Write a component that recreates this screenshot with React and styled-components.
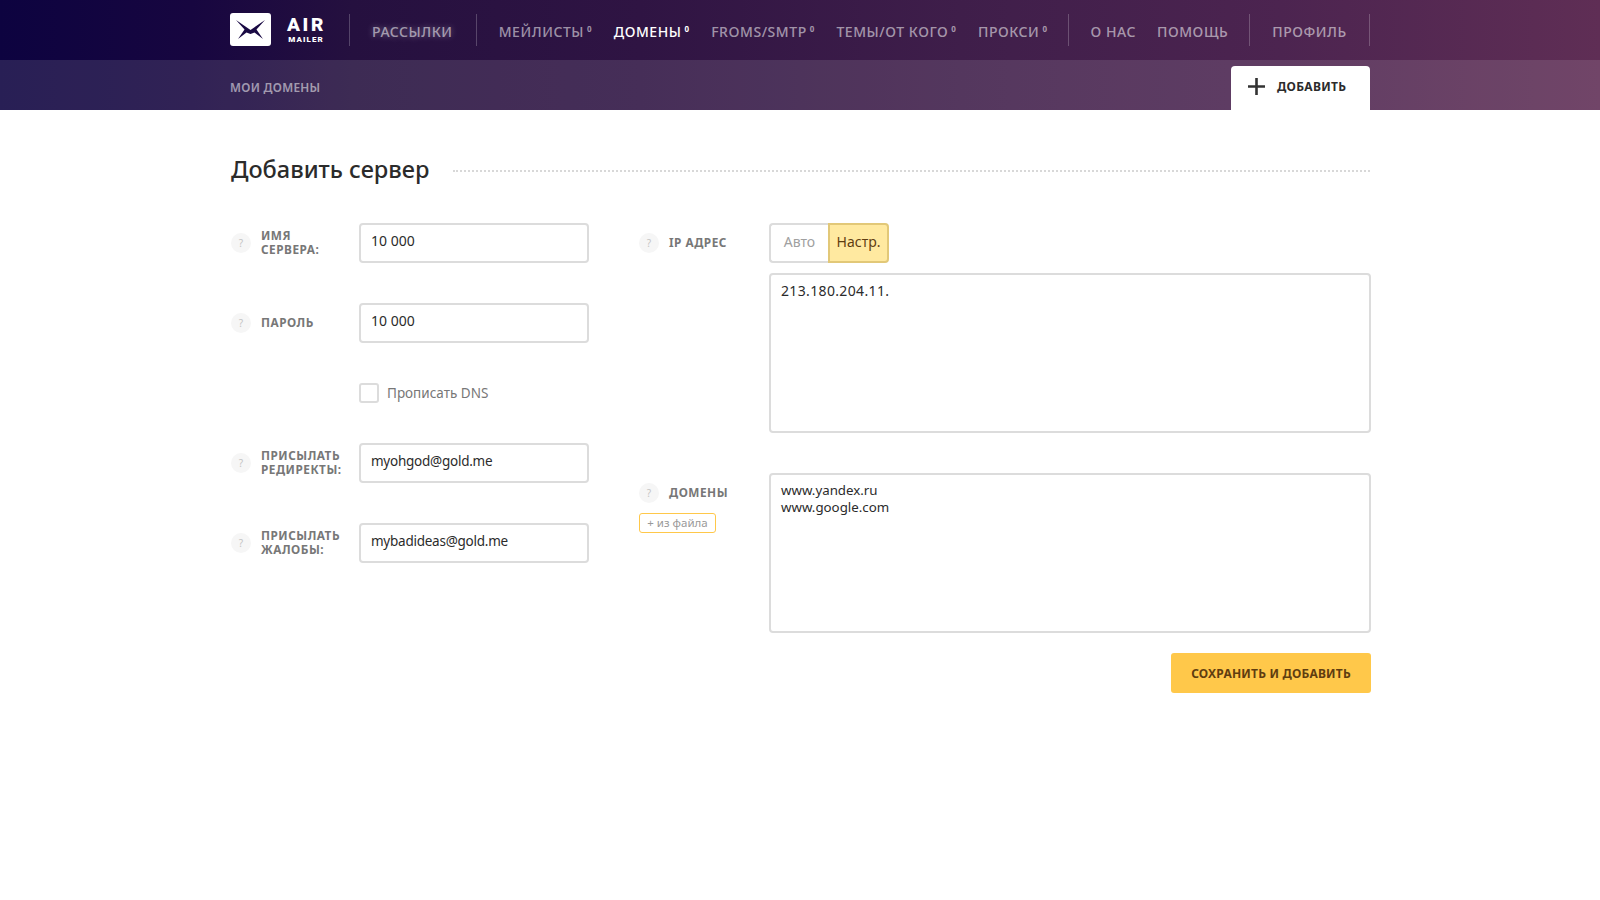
import React from "react";
import styled, { createGlobalStyle } from "styled-components";

const Global = createGlobalStyle`
  html, body { margin: 0; padding: 0; background: #fff; }
  body { font-family: "Noto Sans", "Open Sans", sans-serif; color: #2b2b2b; }
  * { box-sizing: border-box; }
`;
const Head = styled.header`
  height: 110px;
  background: linear-gradient(90deg, #0d0340 0%, #170640 12%, #25103f 22%, #2f1443 40%, #3f1e4a 60%, #4c2450 80%, #5f2e55 100%);
`;
const Top = styled.div`
  height: 60px;
  padding-left: 230px;
  display: flex;
  align-items: center;
`;
const Logo = styled.div`
  width: 119px;
  display: flex;
  align-items: center;
  gap: 16px;
`;
const LogoIcon = styled.svg`
  width: 41px;
  height: 33px;
  display: block;
  margin-top: -1px;
`;
const LogoText = styled.div`
  display: flex;
  flex-direction: column;
  align-items: flex-end;
  color: #fff;
  font-family: "Roboto", "Liberation Sans", sans-serif;
  font-weight: 900;
  line-height: 1;
  margin-top: -1px;
`;
const Air = styled.span`
  font-size: 19px;
  letter-spacing: 2.6px;
  margin-right: -2px;
`;
const Mailer = styled.span`
  font-size: 8px;
  letter-spacing: 1.1px;
  margin-top: 2px;
`;
const Sep = styled.div`
  width: 1px;
  height: 32px;
  flex: none;
  background: rgba(255, 255, 255, 0.22);
`;
const Group = styled.nav`
  display: flex;
  align-items: center;
  gap: ${p => p.$gap}px;
  padding: 2px ${p => p.$right}px 0 ${p => p.$left}px;
`;
const Item = styled.a`
  font-family: "Noto Sans", sans-serif;
  font-size: 14px;
  font-weight: 500;
  letter-spacing: 0.55px;
  white-space: nowrap;
  color: ${p => (p.$active ? "#fff" : "rgba(255,255,255,.55)")};
  text-shadow: ${p => (p.$glow ? "0 0 6px rgba(255,255,255,.35)" : "none")};
  sup {
    font-size: 8px;
    font-weight: 700;
    margin-left: 3px;
    vertical-align: 5px;
    line-height: 0;
  }
`;
const Sub = styled.div`
  height: 50px;
  padding: 0 230px;
  display: flex;
  align-items: center;
  justify-content: space-between;
  background: rgba(255, 255, 255, 0.115);
`;
const SubTitle = styled.span`
  font-size: 11.8px;
  font-weight: 600;
  letter-spacing: 0.3px;
  padding-top: 3px;
  color: rgba(255, 255, 255, 0.55);
`;
const AddTab = styled.a`
  align-self: flex-end;
  width: 139px;
  height: 44px;
  background: #fff;
  border-radius: 4px 4px 0 0;
  display: flex;
  align-items: center;
  padding: 0 0 4px 17px;
  gap: 12px;
  font-size: 12px;
  font-weight: 700;
  letter-spacing: 0.3px;
  color: #2b2b2b;
`;
const PlusIcon = styled.svg`
  width: 17px;
  height: 17px;
  flex: none;
`;
const Main = styled.main`
  width: 1141px;
  margin-left: 230px;
  padding-top: 44px;
`;
const TitleRow = styled.div`
  display: flex;
  align-items: center;
  gap: 24px;
  height: 30px;
  margin-bottom: 39px;
`;
const Title = styled.h1`
  margin: 0;
  font-size: 23.5px;
  font-weight: 500;
  color: #2b2b2b;
  padding-left: 1px;
  white-space: nowrap;
`;
const Dots = styled.div`
  flex: 1;
  margin: 4px 1px 0 0;
  border-top: 2px dotted #d8d8d8;
`;
const Columns = styled.div`
  display: grid;
  grid-template-columns: 360px 1fr;
  gap: 49px;
`;
const Col = styled.div`
  display: flex;
  flex-direction: column;
`;
const Row = styled.div`
  display: flex;
  align-items: center;
  padding-left: 1px;
  margin-bottom: ${p => p.$mb ?? 40}px;
`;
const Hint = styled.span`
  width: 20px;
  height: 20px;
  flex: none;
  border-radius: 50%;
  background: #f6f6f6;
  color: #c4c4c4;
  font-size: 10px;
  display: flex;
  align-items: center;
  justify-content: center;
`;
const Label = styled.label`
  width: 108px;
  padding: 0 10px;
  margin-top: -3px;
  flex: none;
  font-size: 11.8px;
  font-weight: 700;
  line-height: 14px;
  letter-spacing: 0.5px;
  color: #777;
`;
const Input = styled.div`
  width: 230px;
  height: 40px;
  border: 2px solid #dcdcdc;
  border-radius: 4px;
  font-size: ${p => (p.$mail ? 13.5 : 14)}px;
  letter-spacing: ${p => (p.$mail ? -0.25 : 0)}px;
  line-height: ${p => (p.$mail ? 33 : 32)}px;
  padding-left: 10px;
  color: #2b2b2b;
`;
const CheckRow = styled.div`
  display: flex;
  align-items: center;
  gap: 8px;
  margin: 0 0 40px 129px;
  font-size: 13.5px;
  line-height: 20px;
  color: #777;
`;
const Check = styled.span`
  width: 20px;
  height: 20px;
  border: 2px solid #dcdcdc;
  border-radius: 3px;
`;
const Toggle = styled.div`
  display: flex;
  height: 40px;
  width: 120px;
  margin-bottom: 10px;
`;
const Opt = styled.span`
  flex: 1;
  display: flex;
  align-items: center;
  justify-content: center;
  font-size: 14px;
  padding-bottom: 4px;
  border: 2px solid ${p => (p.$on ? "#e2c878" : "#dcdcdc")};
  border-radius: ${p => (p.$on ? "0 4px 4px 0" : "4px 0 0 4px")};
  border-right-width: ${p => (p.$on ? 2 : 0)}px;
  background: ${p => (p.$on ? "#ffe9a0" : "#fff")};
  color: ${p => (p.$on ? "#5f3d10" : "#a0a0a0")};
  white-space: nowrap;
`;
const Area = styled.div`
  width: 602px;
  height: 160px;
  border: 2px solid #dcdcdc;
  border-radius: 4px;
  padding: 7px 10px;
  font-size: ${p => (p.$digits ? 14 : 13.3)}px;
  letter-spacing: ${p => (p.$digits ? 0.35 : 0)}px;
  line-height: 17px;
  color: #2b2b2b;
  white-space: pre-line;
  margin-bottom: ${p => p.$mb}px;
`;
const SideRow = styled.div`
  display: flex;
  align-items: flex-start;
`;
const LabelCell = styled.div`
  width: 130px;
  flex: none;
  display: flex;
  flex-direction: column;
`;
const LabelLine = styled.div`
  display: flex;
  align-items: center;
  height: 20px;
  margin-top: 10px;
`;
const FileBtn = styled.a`
  margin-top: 10px;
  width: 77px;
  height: 20px;
  border: 1px solid #ffc84a;
  border-radius: 3px;
  font-size: 11.5px;
  line-height: 17px;
  text-align: center;
  color: #999;
`;
const Actions = styled.div`
  display: flex;
  justify-content: flex-end;
  width: 732px;
`;
const Save = styled.button`
  width: 200px;
  height: 40px;
  border: 0;
  border-radius: 3px;
  background: #ffc84a;
  color: #5f3d10;
  font-family: inherit;
  font-size: 12px;
  font-weight: 700;
  letter-spacing: 0.2px;
`;

const Field = ({ label, value, mb, mail }) => (
  <Row $mb={mb}>
    <Hint>?</Hint>
    <Label>{label}</Label>
    <Input $mail={mail}>{value}</Input>
  </Row>
);

export default function App() {
  return (
    <>
      <Global />
      <Head>
        <Top>
          <Logo>
            <LogoIcon viewBox="0 0 41 33">
              <rect width="41" height="33" rx="3" fill="#fff" />
              <path d="M6 7 L20.5 17 L35 7 L26.5 16.5 L33 26 L24.5 19.5 L20.5 21 L16.5 19.5 L8 26 L14.5 16.5 Z" fill="#1a0a44" />
            </LogoIcon>
            <LogoText>
              <Air>AIR</Air>
              <Mailer>MAILER</Mailer>
            </LogoText>
          </Logo>
          <Sep />
          <Group $gap={0} $left={22} $right={23}><Item $glow>РАССЫЛКИ</Item></Group>
          <Sep />
          <Group $gap={21.5} $left={22} $right={20}>
            <Item>МЕЙЛИСТЫ<sup>0</sup></Item>
            <Item $active>ДОМЕНЫ<sup>0</sup></Item>
            <Item>FROMS/SMTP<sup>0</sup></Item>
            <Item>ТЕМЫ/ОТ КОГО<sup>0</sup></Item>
            <Item>ПРОКСИ<sup>0</sup></Item>
          </Group>
          <Sep />
          <Group $gap={21} $left={22} $right={21}>
            <Item>О НАС</Item>
            <Item>ПОМОЩЬ</Item>
          </Group>
          <Sep />
          <Group $gap={0} $left={22} $right={22}><Item>ПРОФИЛЬ</Item></Group>
          <Sep />
        </Top>
        <Sub>
          <SubTitle>МОИ ДОМЕНЫ</SubTitle>
          <AddTab>
            <PlusIcon viewBox="0 0 17 17">
              <path d="M7.2 0h2.6v7.2H17v2.6H9.8V17H7.2V9.8H0V7.2h7.2z" fill="#333" />
            </PlusIcon>
            ДОБАВИТЬ
          </AddTab>
        </Sub>
      </Head>
      <Main>
        <TitleRow>
          <Title>Добавить сервер</Title>
          <Dots />
        </TitleRow>
        <Columns>
          <Col>
            <Field label="ИМЯ СЕРВЕРА:" value="10 000" />
            <Field label="ПАРОЛЬ" value="10 000" />
            <CheckRow><Check />Прописать DNS</CheckRow>
            <Field label="ПРИСЫЛАТЬ РЕДИРЕКТЫ:" value="myohgod@gold.me" mail />
            <Field label="ПРИСЫЛАТЬ ЖАЛОБЫ:" value="mybadideas@gold.me" mail mb={0} />
          </Col>
          <Col>
            <SideRow>
              <LabelCell>
                <LabelLine>
                  <Hint>?</Hint>
                  <Label>IP АДРЕС</Label>
                </LabelLine>
              </LabelCell>
              <Col>
                <Toggle>
                  <Opt>Авто</Opt>
                  <Opt $on>Настр.</Opt>
                </Toggle>
                <Area $digits $mb={40}>213.180.204.11.</Area>
              </Col>
            </SideRow>
            <SideRow>
              <LabelCell>
                <LabelLine>
                  <Hint>?</Hint>
                  <Label>ДОМЕНЫ</Label>
                </LabelLine>
                <FileBtn>+ из файла</FileBtn>
              </LabelCell>
              <Area $mb={20}>{"www.yandex.ru\nwww.google.com"}</Area>
            </SideRow>
            <Actions><Save>СОХРАНИТЬ И ДОБАВИТЬ</Save></Actions>
          </Col>
        </Columns>
      </Main>
    </>
  );
}
